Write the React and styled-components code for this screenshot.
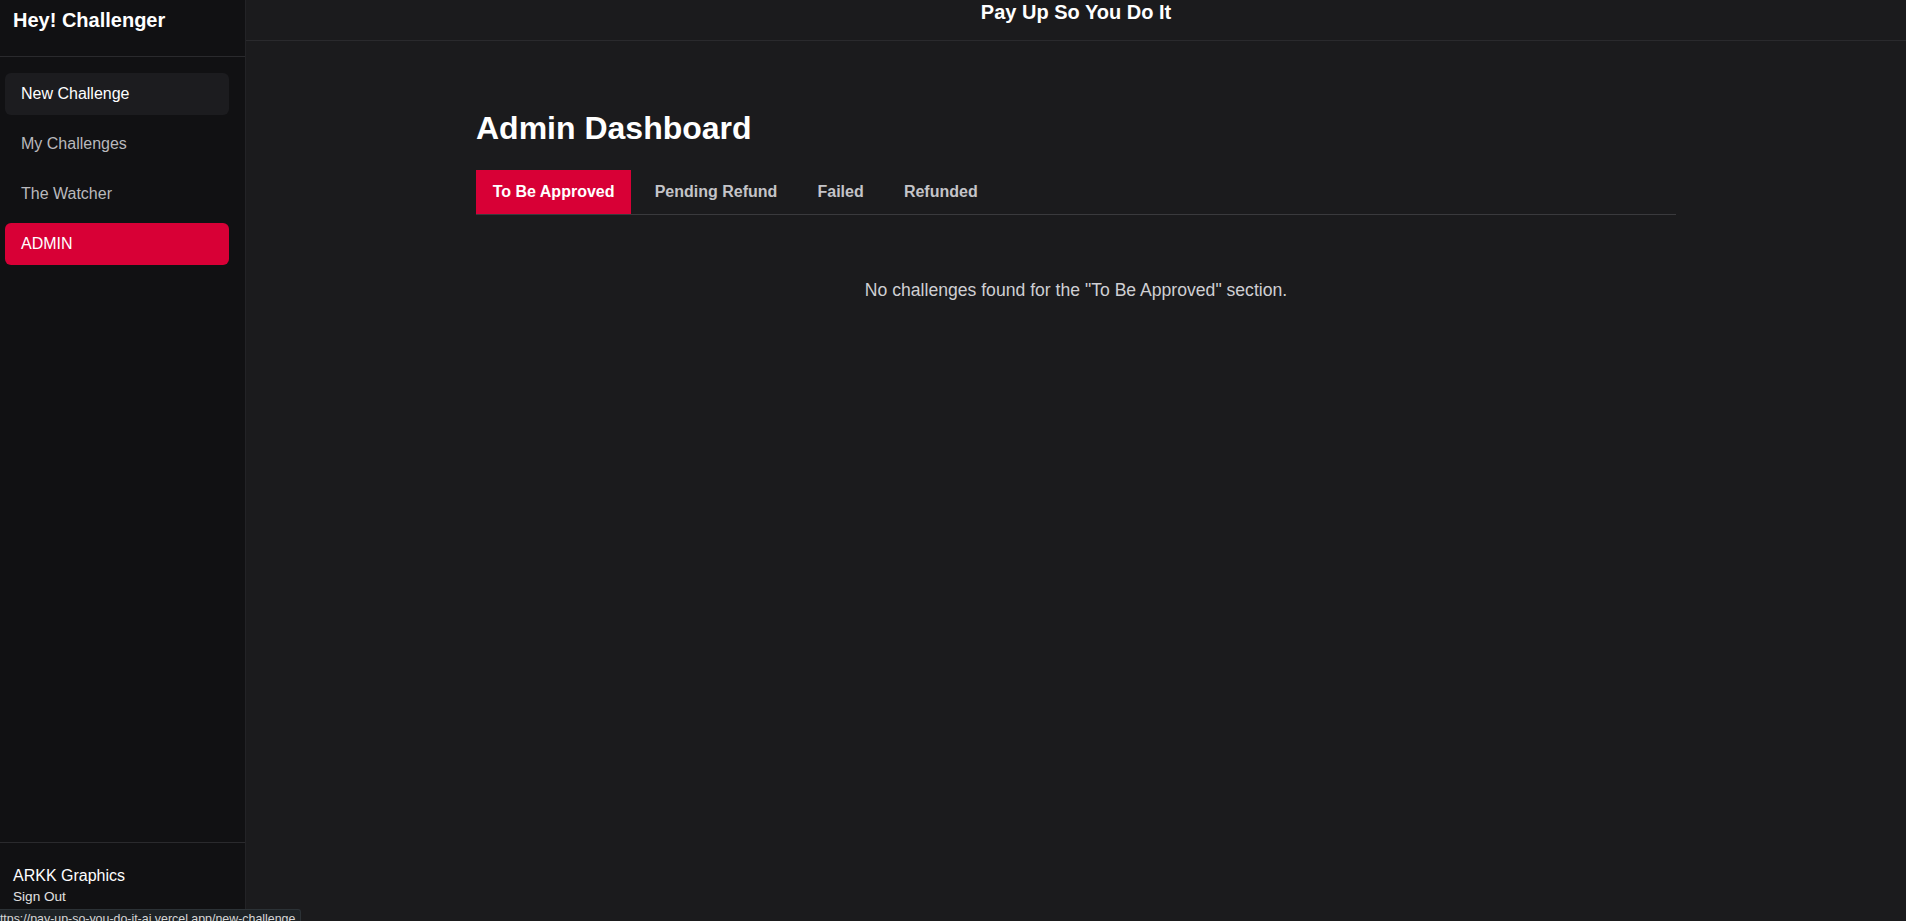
import React from "react";
import styled, { createGlobalStyle } from "styled-components";

const GlobalStyle = createGlobalStyle`
  html, body { margin: 0; padding: 0; background: #1b1b1d; }
  body { font-family: "Liberation Sans", Arial, sans-serif; color: #fff; }
  * { box-sizing: border-box; }
`;

const Layout = styled.div`
  display: flex;
  height: 921px;
  overflow: hidden;
`;

const Sidebar = styled.aside`
  width: 246px;
  flex-shrink: 0;
  background: #111113;
  border-right: 1px solid #232326;
  display: flex;
  flex-direction: column;
`;

const Brand = styled.div`
  height: 57px;
  padding: 8px 13px 0;
  border-bottom: 1px solid #2a2a2d;
  font-size: 20px;
  font-weight: 700;
  line-height: 24px;
  color: #fff;
`;

const Nav = styled.nav`
  flex: 1;
  display: flex;
  flex-direction: column;
  gap: 8px;
  padding: 16px 16px 0 5px;
`;

const NavItem = styled.a`
  display: flex;
  align-items: center;
  height: 42px;
  padding: 0 16px;
  border-radius: 6px;
  font-size: 16px;
  text-decoration: none;
  color: ${(p) => (p.$variant === "muted" ? "#b9b9bd" : "#fff")};
  background: ${(p) =>
    p.$variant === "active" ? "#d80036" : p.$variant === "hover" ? "#1c1c1f" : "transparent"};
`;

const Footer = styled.div`
  border-top: 1px solid #2a2a2d;
  padding: 24px 13px 16px;
  display: flex;
  flex-direction: column;
  gap: 4px;
`;

const UserName = styled.div`
  font-size: 16px;
  line-height: 18px;
  color: #fff;
`;

const SignOut = styled.a`
  font-size: 13.6px;
  line-height: 16px;
  color: #e2e2e2;
`;

const Main = styled.main`
  flex: 1;
  display: flex;
  flex-direction: column;
  background: #1b1b1d;
`;

const TopBar = styled.header`
  height: 41px;
  border-bottom: 1px solid #2a2a2d;
  text-align: center;
  font-size: 20px;
  font-weight: 700;
  line-height: 24px;
  color: #fff;
`;

const Container = styled.section`
  width: 1200px;
  margin: 0 auto;
  padding-top: 69px;
`;

const Title = styled.h1`
  margin: 0 0 23px;
  font-size: 32px;
  line-height: 37px;
  font-weight: 700;
  color: #fff;
`;

const Tabs = styled.div`
  display: flex;
  gap: 6.8px;
  border-bottom: 1px solid #3a3a3d;
  height: 45px;
`;

const Tab = styled.button`
  height: 44px;
  padding: 0 16.7px;
  border: none;
  font-family: inherit;
  font-size: 16px;
  font-weight: 700;
  cursor: pointer;
  background: ${(p) => (p.$active ? "#d80036" : "transparent")};
  color: ${(p) => (p.$active ? "#fff" : "#c4c4c8")};
`;

const Empty = styled.p`
  margin: 65px 0 0;
  text-align: center;
  font-size: 17.6px;
  line-height: 20px;
  color: #cfcfd3;
`;

const StatusBar = styled.div`
  position: fixed;
  left: 0;
  bottom: 0;
  height: 12px;
  width: 301px;
  padding-top: 2px;
  background: #1e2326;
  border-top: 1px solid #2c3236;
  border-right: 1px solid #2c3236;
  border-top-right-radius: 3px;
  overflow: hidden;
  font-size: 12.4px;
  line-height: 14px;
  color: #d6d6d6;
  white-space: nowrap;
  text-indent: -7px;
`;

const tabs = ["To Be Approved", "Pending Refund", "Failed", "Refunded"];

export default function App() {
  return (
    <>
      <GlobalStyle />
      <Layout>
        <Sidebar>
          <Brand>Hey! Challenger</Brand>
          <Nav>
            <NavItem $variant="hover">New Challenge</NavItem>
            <NavItem $variant="muted">My Challenges</NavItem>
            <NavItem $variant="muted">The Watcher</NavItem>
            <NavItem $variant="active">ADMIN</NavItem>
          </Nav>
          <Footer>
            <UserName>ARKK Graphics</UserName>
            <SignOut>Sign Out</SignOut>
          </Footer>
        </Sidebar>
        <Main>
          <TopBar>Pay Up So You Do It</TopBar>
          <Container>
            <Title>Admin Dashboard</Title>
            <Tabs>
              {tabs.map((t, i) => (
                <Tab key={t} $active={i === 0}>
                  {t}
                </Tab>
              ))}
            </Tabs>
            <Empty>No challenges found for the "To Be Approved" section.</Empty>
          </Container>
        </Main>
      </Layout>
      <StatusBar>https://pay-up-so-you-do-it-ai.vercel.app/new-challenge</StatusBar>
    </>
  );
}
